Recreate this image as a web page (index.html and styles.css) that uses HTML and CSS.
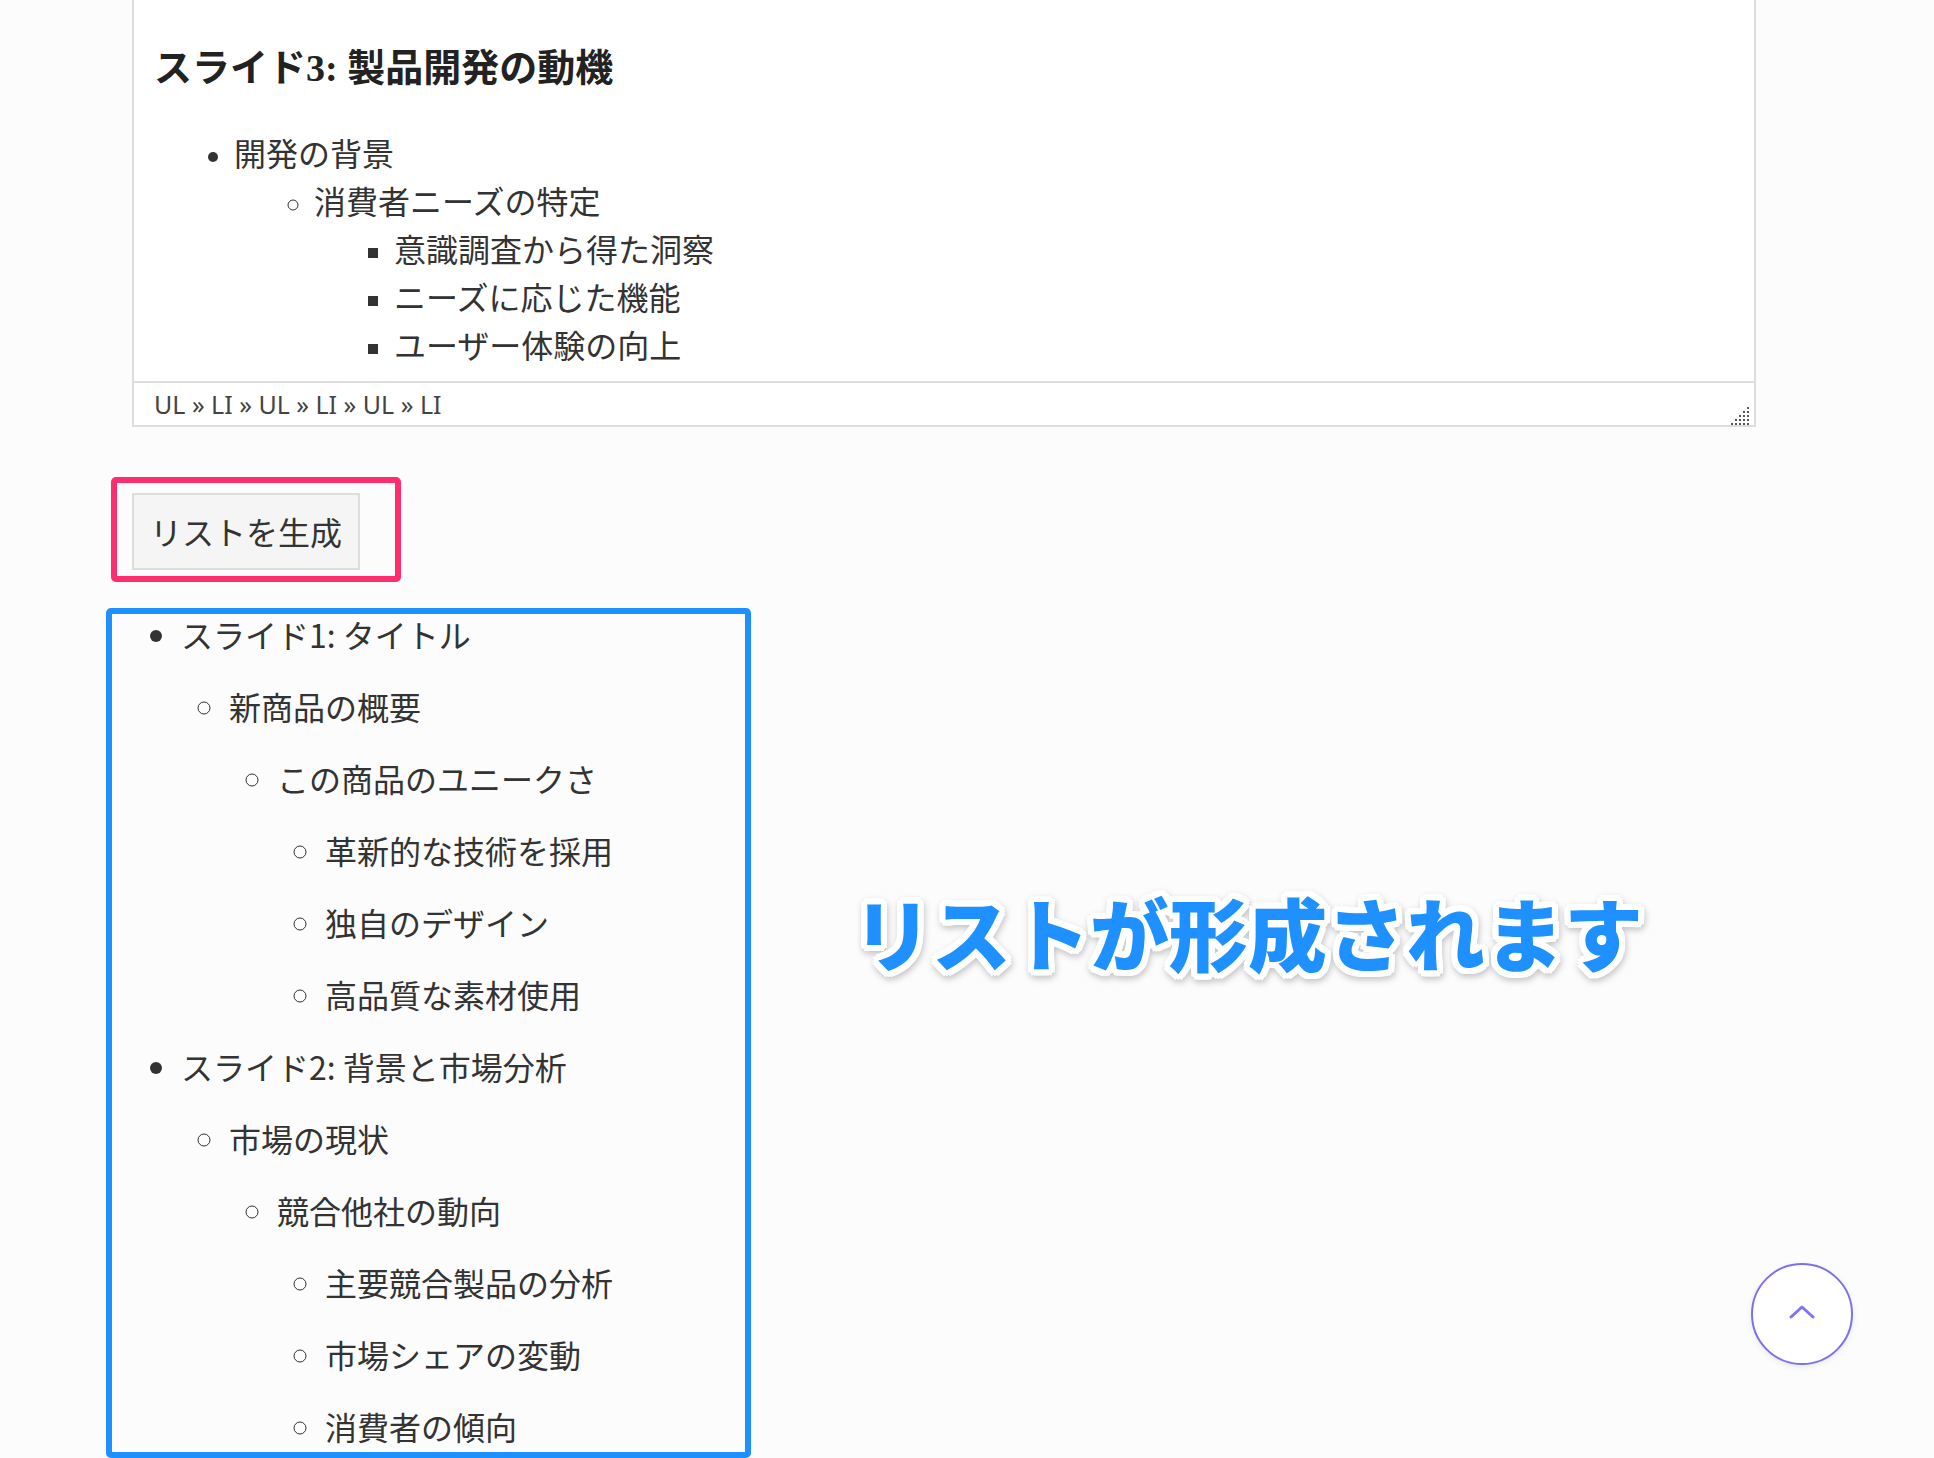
FILE: index.html
```html
<!DOCTYPE HTML>
<html lang="ja">

<head>
    <title>リスト生成</title>
    <link rel="stylesheet" href="styles.css">
</head>

<body>
    <main class="page">

        <div class="editor">
            <div class="editor-body">
                <h2>スライド3: 製品開発の動機</h2>
                <ul>
                    <li>開発の背景
                        <ul>
                            <li>消費者ニーズの特定
                                <ul>
                                    <li>意識調査から得た洞察</li>
                                    <li>ニーズに応じた機能</li>
                                    <li>ユーザー体験の向上</li>
                                </ul>
                            </li>
                        </ul>
                    </li>
                </ul>
            </div>
            <div class="status">
                <span>UL » LI » UL » LI » UL » LI</span>
                <svg class="grip" width="18" height="18" viewBox="0 0 18 18">
                    <rect x="16" y="0" width="2" height="2" />
                    <rect x="12" y="4" width="2" height="2" />
                    <rect x="16" y="4" width="2" height="2" />
                    <rect x="8" y="8" width="2" height="2" />
                    <rect x="12" y="8" width="2" height="2" />
                    <rect x="16" y="8" width="2" height="2" />
                    <rect x="4" y="12" width="2" height="2" />
                    <rect x="8" y="12" width="2" height="2" />
                    <rect x="12" y="12" width="2" height="2" />
                    <rect x="16" y="12" width="2" height="2" />
                    <rect x="0" y="16" width="2" height="2" />
                    <rect x="4" y="16" width="2" height="2" />
                    <rect x="8" y="16" width="2" height="2" />
                    <rect x="12" y="16" width="2" height="2" />
                    <rect x="16" y="16" width="2" height="2" />
                </svg>
            </div>
        </div>

        <div class="highlight">
            <button class="generate">リストを生成</button>
        </div>

        <div class="result">
            <ul>
                <li>スライド1: タイトル
                    <ul>
                        <li>新商品の概要
                            <ul>
                                <li>この商品のユニークさ
                                    <ul>
                                        <li>革新的な技術を採用</li>
                                        <li>独自のデザイン</li>
                                        <li>高品質な素材使用</li>
                                    </ul>
                                </li>
                            </ul>
                        </li>
                    </ul>
                </li>
                <li>スライド2: 背景と市場分析
                    <ul>
                        <li>市場の現状
                            <ul>
                                <li>競合他社の動向
                                    <ul>
                                        <li>主要競合製品の分析</li>
                                        <li>市場シェアの変動</li>
                                        <li>消費者の傾向</li>
                                    </ul>
                                </li>
                            </ul>
                        </li>
                    </ul>
                </li>
            </ul>
        </div>

    </main>

    <p class="caption">リストが形成されます</p>

    <a class="to-top" href="#">
        <svg width="26" height="14" viewBox="0 0 26 14">
            <path d="M2 12 L13 2 L24 12" fill="none" stroke="#7f74f3" stroke-width="3" stroke-linecap="round" stroke-linejoin="round" />
        </svg>
    </a>
</body>

</html>
```

FILE: styles.css
```css
body {
    margin: 0;
    background: #fcfcfc;
    color: #333;
    font-family: "Noto Sans CJK JP", "Noto Sans", sans-serif;
    overflow: hidden;
}

.page {
    padding-left: 132px;
}

/* editor (page is scrolled, top edge is out of view) */
.editor {
    width: 1624px;
    box-sizing: border-box;
    margin-top: -30px;
    border: 2px solid #ddd;
    background: #fff;
}

.editor-body {
    padding: 20px 20px 10px;
    font-family: "Liberation Serif", "Noto Sans CJK JP", serif;
    font-size: 32px;
    color: #333;
}

.editor-body h2 {
    margin: 54px 0 41px;
    font-size: 38px;
    line-height: 44px;
    font-weight: bold;
    color: #222;
}

.editor-body ul {
    margin: 0;
    padding-left: 80px;
}

.editor-body li {
    line-height: 48px;
}

.status {
    display: flex;
    justify-content: space-between;
    align-items: flex-end;
    height: 42px;
    padding: 0 5px 0 20px;
    border-top: 2px solid #ddd;
    font-family: "Noto Sans", sans-serif;
    font-size: 25px;
    line-height: 42px;
    color: #444;
}

.grip {
    display: block;
    fill: #555;
}

/* button with red marker */
.highlight {
    width: fit-content;
    margin: 50px 0 0 -21px;
    padding: 10px 35px 6px 15px;
    border: 6px solid #fe2d6e;
    border-radius: 5px;
}

.generate {
    display: block;
    height: 77px;
    padding: 0 16px;
    border: 2px solid #ddd;
    background: #f5f5f5;
    color: #333;
    font-family: "Noto Sans CJK JP", sans-serif;
    font-size: 32px;
    line-height: 73px;
    cursor: pointer;
}

/* generated list with blue marker */
.result {
    width: 645px;
    box-sizing: border-box;
    margin: 26px 0 0 -26px;
    padding-bottom: 6px;
    border: 6px solid #1e90ff;
    border-radius: 5px;
    font-size: 32px;
}

.result ul {
    margin: 0;
    padding-left: 48px;
    list-style-type: circle;
}

.result > ul {
    padding-left: 69px;
    list-style-type: disc;
}

.result li {
    margin-top: 32px;
    line-height: 40px;
}

.result > ul > li:first-child {
    margin-top: 0;
}

.caption {
    position: absolute;
    left: 853px;
    top: 892px;
    margin: 0;
    font-family: "Noto Sans CJK JP", sans-serif;
    font-size: 79px;
    font-weight: 900;
    line-height: 79px;
    color: #1e90ff;
    text-shadow:
        6px 0 0 #fff, -6px 0 0 #fff, 0 6px 0 #fff, 0 -6px 0 #fff,
        4px 4px 0 #fff, -4px 4px 0 #fff, 4px -4px 0 #fff, -4px -4px 0 #fff,
        6px 3px 0 #fff, -6px 3px 0 #fff, 6px -3px 0 #fff, -6px -3px 0 #fff,
        3px 6px 0 #fff, -3px 6px 0 #fff, 3px -6px 0 #fff, -3px -6px 0 #fff;
    filter: drop-shadow(1px 3px 3px rgba(0, 0, 0, 0.22));
}

.to-top {
    position: fixed;
    right: 81px;
    bottom: 93px;
    display: flex;
    align-items: center;
    justify-content: center;
    width: 102px;
    height: 102px;
    box-sizing: border-box;
    padding-bottom: 4px;
    border: 2px solid #7d70f0;
    border-radius: 50%;
    background: #fff;
    box-shadow: 0 2px 6px rgba(0, 0, 0, 0.08);
}
```
